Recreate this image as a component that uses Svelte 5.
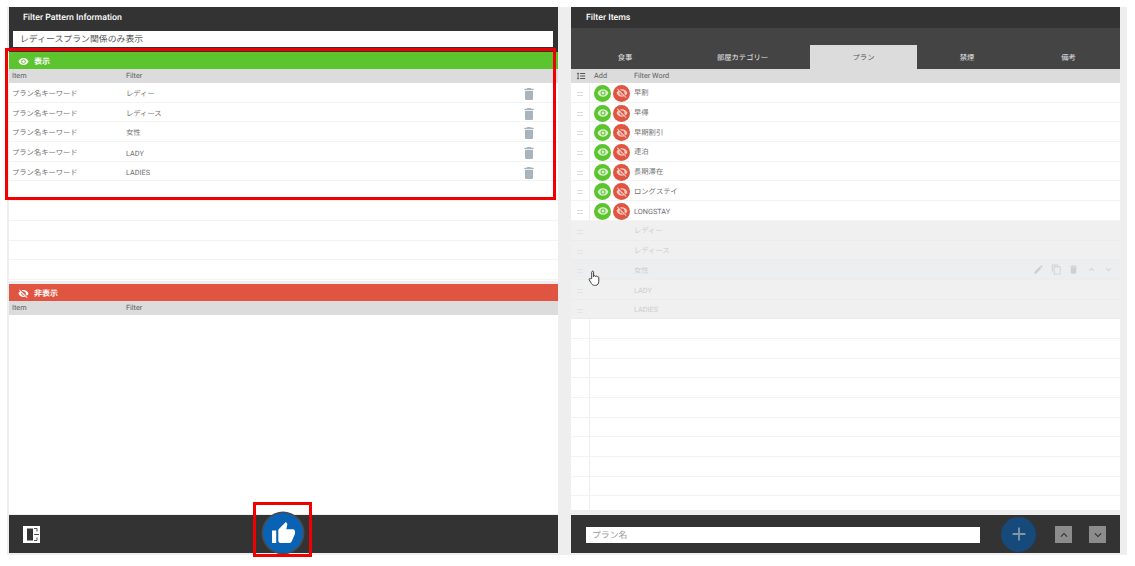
<script>
  const eye = "M12 4.5C7 4.5 2.73 7.61 1 12c1.73 4.39 6 7.5 11 7.5s9.27-3.11 11-7.5c-1.73-4.39-6-7.5-11-7.5zM12 17c-2.76 0-5-2.24-5-5s2.24-5 5-5 5 2.24 5 5-2.24 5-5 5zm0-8c-1.66 0-3 1.34-3 3s1.34 3 3 3 3-1.34 3-3-1.34-3-3-3z";
  const eyeOff = "M12 7c2.76 0 5 2.24 5 5 0 .65-.13 1.26-.36 1.83l2.92 2.92c1.51-1.26 2.7-2.89 3.43-4.75-1.73-4.39-6-7.5-11-7.5-1.4 0-2.74.25-3.98.7l2.16 2.16C10.74 7.13 11.35 7 12 7zM2 4.27l2.28 2.28.46.46C3.08 8.3 1.78 10.02 1 12c1.73 4.39 6 7.5 11 7.5 1.55 0 3.03-.3 4.38-.84l.42.42L19.73 22 21 20.73 3.27 3 2 4.27zM7.53 9.8l1.55 1.55c-.05.21-.08.43-.08.65 0 1.66 1.34 3 3 3 .22 0 .44-.03.65-.08l1.55 1.55c-.67.33-1.41.53-2.2.53-2.76 0-5-2.24-5-5 0-.79.2-1.53.53-2.2z";
  const trash = "M6 19c0 1.1.9 2 2 2h8c1.1 0 2-.9 2-2V7H6v12zM19 4h-3.5l-1-1h-5l-1 1H5v2h14V4z";
  const thumb = "M1 21h4V9H1v12zm22-11c0-1.1-.9-2-2-2h-6.31l.95-4.57.03-.32c0-.41-.17-.79-.44-1.06L14.17 1 7.59 7.59C7.22 7.95 7 8.45 7 9v10c0 1.1.9 2 2 2h9c.83 0 1.54-.5 1.84-1.22l3.02-7.05c.09-.23.14-.47.14-.73v-2z";
  const spacing = "M6 7h2.5L5 3.5 1.5 7H4v10H1.5L5 20.5 8.5 17H6V7zm4-2v2h12V5H10zm0 14h12v-2H10v2zm0-6h12v-2H10v2z";
  const pencil = "M3 17.25V21h3.75L17.81 9.94l-3.75-3.75L3 17.25zM20.71 7.04c.39-.39.39-1.02 0-1.41l-2.34-2.34c-.39-.39-1.02-.39-1.41 0l-1.83 1.83 3.75 3.75 1.83-1.83z";
  const copy = "M16 1H4c-1.1 0-2 .9-2 2v14h2V3h12V1zm3 4H8c-1.1 0-2 .9-2 2v14c0 1.1.9 2 2 2h11c1.1 0 2-.9 2-2V7c0-1.1-.9-2-2-2zm0 16H8V7h11v14z";
  const up = "M7.41 15.41L12 10.83l4.59 4.58L18 14l-6-6-6 6z";
  const down = "M7.41 8.59L12 13.17l4.59-4.58L18 10l-6 6-6-6z";

  const shown = ["レディー", "レディース", "女性", "LADY", "LADIES"];
  const tabs = ["食事", "部屋カテゴリー", "プラン", "禁煙", "備考"];
  const words = ["早割", "早得", "早期割引", "連泊", "長期滞在", "ロングステイ", "LONGSTAY"];
  const actions = [pencil, copy, trash, up, down];
</script>

<div class="page">
  <div class="board">
    <section class="panel">
      <header class="title">Filter Pattern Information</header>
      <div class="name-wrap"><div class="name">レディースプラン関係のみ表示</div></div>

      <div class="band green">
        <svg viewBox="0 0 24 24"><path d={eye} /></svg><span>表示</span>
      </div>
      <div class="cols left-cols"><span>Item</span><span>Filter</span></div>
      <div class="visible-list">
        {#each shown as f}
          <div class="row left-row">
            <span>プラン名キーワード</span><span>{f}</span>
            <svg class="trash" viewBox="0 0 24 24"><path d={trash} /></svg>
          </div>
        {/each}
        {#each Array(5) as _}
          <div class="row"></div>
        {/each}
      </div>

      <div class="band red">
        <svg viewBox="0 0 24 24"><path d={eyeOff} /></svg><span>非表示</span>
      </div>
      <div class="cols left-cols"><span>Item</span><span>Filter</span></div>
      <div class="fill"></div>

      <footer class="foot">
        <div class="door">
          <svg viewBox="0 0 17 17" width="17" height="17">
            <rect width="17" height="17" fill="#fff" />
            <path d="M4 2.500h6v12H4z" fill="#333" />
            <path d="M11 2.500h3v3M14 11.500v3h-3M11 8.500h5" fill="none" stroke="#555" stroke-width="1" />
          </svg>
        </div>
        <button class="fab blue" aria-label="OK">
          <svg viewBox="0 0 24 24" width="25" height="25"><path d={thumb} fill="#fff" /></svg>
        </button>
      </footer>
    </section>

    <section class="panel">
      <header class="title items-title">Filter Items</header>
      <nav class="tabs">
        {#each tabs as t, i}
          <div class="tab" class:active={i === 2}>{t}</div>
        {/each}
      </nav>
      <div class="cols right-cols">
        <svg viewBox="0 0 24 24" width="10" height="10"><path d={spacing} fill="#555" /></svg>
        <span>Add</span><span>Filter Word</span>
      </div>
      <div class="word-list">
        {#each words as w}
          <div class="row right-row">
            <span class="grip"></span>
            <span class="pill g"><svg viewBox="0 0 24 24"><path d={eye} /></svg></span>
            <span class="pill r"><svg viewBox="0 0 24 24"><path d={eyeOff} /></svg></span>
            <span class="word">{w}</span>
          </div>
        {/each}
        {#each shown as w, i}
          <div class="row right-row off" class:hover={i === 2}>
            <span class="grip"></span>
            <span class="word spaced">{w}</span>
            {#if i === 2}
              <span class="actions">
                {#each actions as a}
                  <svg viewBox="0 0 24 24" width="11" height="11"><path d={a} /></svg>
                {/each}
              </span>
            {/if}
          </div>
        {/each}
        {#each Array(10) as _}
          <div class="row right-row"><span class="grip none"></span></div>
        {/each}
      </div>
      <footer class="foot right-foot">
        <div class="plan">プラン名</div>
        <button class="fab navy" aria-label="追加">
          <svg viewBox="0 0 24 24" width="22" height="22"><path d="M19 13h-6v6h-2v-6H5v-2h6V5h2v6h6z" fill="#7f95a8" /></svg>
        </button>
        <div class="step"><svg viewBox="0 0 24 24" width="14" height="14"><path d={up} fill="#333" /></svg></div>
        <div class="step"><svg viewBox="0 0 24 24" width="14" height="14"><path d={down} fill="#333" /></svg></div>
      </footer>
    </section>
  </div>

  <div class="mark mark-list"></div>
  <div class="mark mark-fab"></div>
  <svg class="cursor" viewBox="0 0 14 18" width="13" height="17">
    <path d="M4 9V2.200c0-1.500 2-1.500 2 0V7l.2-.6c.5-.8 1.700-.6 1.800.4.5-.8 1.700-.6 1.900.4.6-.6 1.700-.2 1.700.8v4c0 2.500-1.200 4.400-3.600 4.400H7C5 16.400 4 15 3 13.400L1.400 10.600c-.7-1.200.8-2.200 1.600-1.200z" fill="#fff" stroke="#333" stroke-width="1" />
  </svg>
</div>

<style>
  :global(body) {
    margin: 0;
    background: #fff;
  }
  .page {
    position: relative;
    width: 1135px;
    height: 566px;
    overflow: hidden;
    box-sizing: border-box;
    padding: 7px 0 0 7px;
    background: #fff;
    font-family: Roboto, "Noto Sans CJK JP", sans-serif;
    font-size: 7.3px;
    color: #707070;
    text-rendering: geometricPrecision;
  }
  .board {
    width: 1120px;
    height: 548px;
    box-sizing: border-box;
    padding: 0 7px 2px 2px;
    display: flex;
    gap: 13px;
    background: #eee;
  }
  .panel {
    width: 549px;
    display: flex;
    flex-direction: column;
  }
  .title {
    height: 21px;
    flex: none;
    background: #333;
    color: #fff;
    font-size: 8.75px;
    font-weight: 500;
    line-height: 23px;
    padding-left: 14px;
  }
  .items-title {
    padding-left: 15px;
  }
  .name-wrap {
    height: 24px;
    flex: none;
    box-sizing: border-box;
    background: #333;
    padding: 3px 5px 0 4px;
  }
  .name {
    height: 16px;
    background: #fff;
    color: #555;
    font-size: 8.9px;
    line-height: 19px;
    padding-left: 7px;
  }
  .band {
    height: 17px;
    flex: none;
    box-sizing: border-box;
    padding: 1px 0 0 9px;
    display: flex;
    align-items: center;
    color: #fff;
    font-size: 8px;
    font-weight: 700;
    gap: 5px;
  }
  .band svg {
    width: 11px;
    height: 11px;
    fill: #fff;
  }
  .green {
    background: #5cc42f;
  }
  .red {
    background: #e05541;
    margin-top: 3px;
  }
  .cols {
    height: 14px;
    flex: none;
    background: #dcdcdc;
    color: #5c5c5c;
    line-height: 14px;
    display: grid;
    align-items: center;
  }
  .left-cols {
    grid-template-columns: 114px 1fr;
    padding-left: 3px;
  }
  .right-cols {
    grid-template-columns: 23px 40px 1fr;
  }
  .right-cols svg {
    margin-left: 5px;
  }
  .visible-list,
  .word-list {
    flex: none;
    display: flex;
    flex-direction: column;
    background: #fff;
  }
  .visible-list {
    height: 198px;
  }
  .word-list {
    height: 427px;
    margin-bottom: 5px;
    overflow: hidden;
  }
  .row {
    height: 19.7px;
    flex: none;
    box-sizing: border-box;
    border-bottom: 1px solid #f3f3f3;
    display: grid;
    align-items: center;
  }
  .left-row {
    grid-template-columns: 114px 394.5px 1fr;
    padding: 3px 0 0 3px;
  }
  .trash {
    width: 16px;
    height: 16px;
    fill: #aab4bc;
  }
  .fill {
    flex: 1;
    background: #fff;
    border-bottom: 1px solid #eee;
  }
  .foot {
    height: 38px;
    flex: none;
    background: #333;
    display: flex;
    align-items: center;
  }
  .door {
    margin: 1px 0 0 14px;
    height: 17px;
  }
  .fab {
    border: 0;
    padding: 0;
    border-radius: 50%;
    display: flex;
    align-items: center;
    justify-content: center;
  }
  .blue {
    width: 40px;
    height: 40px;
    background: #0a62b4;
    box-shadow: 0 0 0 1.5px #4a4a4a;
    margin: -2px 0 0 223px;
  }
  .right-row {
    display: flex;
    align-items: center;
    position: relative;
  }
  .grip {
    width: 19px;
    height: 100%;
    flex: none;
    box-sizing: border-box;
    border-right: 1px solid #eee;
    position: relative;
  }
  .grip::after {
    content: "";
    position: absolute;
    left: 6px;
    top: 9px;
    width: 6px;
    height: 2px;
    border: solid #ddd;
    border-width: 1px 0;
  }
  .grip.none::after {
    display: none;
  }
  .pill {
    width: 17px;
    height: 17px;
    border-radius: 50%;
    flex: none;
    margin: 2px 0 0 2px;
    display: flex;
    align-items: center;
    justify-content: center;
  }
  .pill svg {
    width: 12px;
    height: 12px;
    fill: #d9f2cc;
  }
  .pill.g {
    background: #5cc42f;
    margin-left: 4px;
  }
  .pill.r {
    background: #e05541;
  }
  .pill.r svg {
    fill: #f6c9c1;
  }
  .word {
    margin: 2px 0 0 4px;
  }
  .word.spaced {
    margin-left: 44px;
  }
  .off {
    background: #f0f0f0;
    border-bottom-color: #ececec;
  }
  .off .word {
    color: #cdcdcd;
  }
  .off .grip::after {
    border-color: #e4e4e4;
  }
  .hover {
    background: #eceef0;
  }
  .off .grip {
    border-right-color: transparent;
  }
  .actions {
    position: absolute;
    left: 462px;
    top: 4px;
    display: flex;
    gap: 6.6px;
  }
  .actions svg {
    fill: #cfcfcf;
  }
  .tabs {
    height: 41px;
    flex: none;
    background: #444;
    display: grid;
    grid-template-columns: 108px 131px 107px 100px 1fr;
    align-items: end;
  }
  .tab {
    height: 24px;
    line-height: 26px;
    text-align: center;
    color: #e8e8e8;
  }
  .tab:nth-child(2) {
    padding-right: 4px;
  }
  .tab.active {
    background: #dcdcdc;
    color: #555;
  }
  .right-foot {
    padding-left: 15px;
  }
  .plan {
    width: 388px;
    height: 16px;
    margin-top: 1px;
    padding-left: 6px;
    background: #fff;
    color: #999;
    font-size: 8.9px;
    line-height: 19px;
  }
  .navy {
    width: 35px;
    height: 35px;
    background: #164a7a;
    margin-left: 21px;
  }
  .step {
    width: 17px;
    height: 17px;
    margin: 1px 0 0 19px;
    background: #8c8c8c;
    display: flex;
    align-items: center;
    justify-content: center;
  }
  .step + .step {
    margin-left: 17px;
  }
  .mark {
    position: absolute;
    box-sizing: border-box;
    border: 3px solid #f00000;
    pointer-events: none;
  }
  .mark-list {
    left: 5px;
    top: 48px;
    width: 551px;
    height: 152px;
  }
  .mark-fab {
    left: 253px;
    top: 502px;
    width: 59px;
    height: 55px;
  }
  .cursor {
    position: absolute;
    left: 588px;
    top: 270px;
  }
</style>
